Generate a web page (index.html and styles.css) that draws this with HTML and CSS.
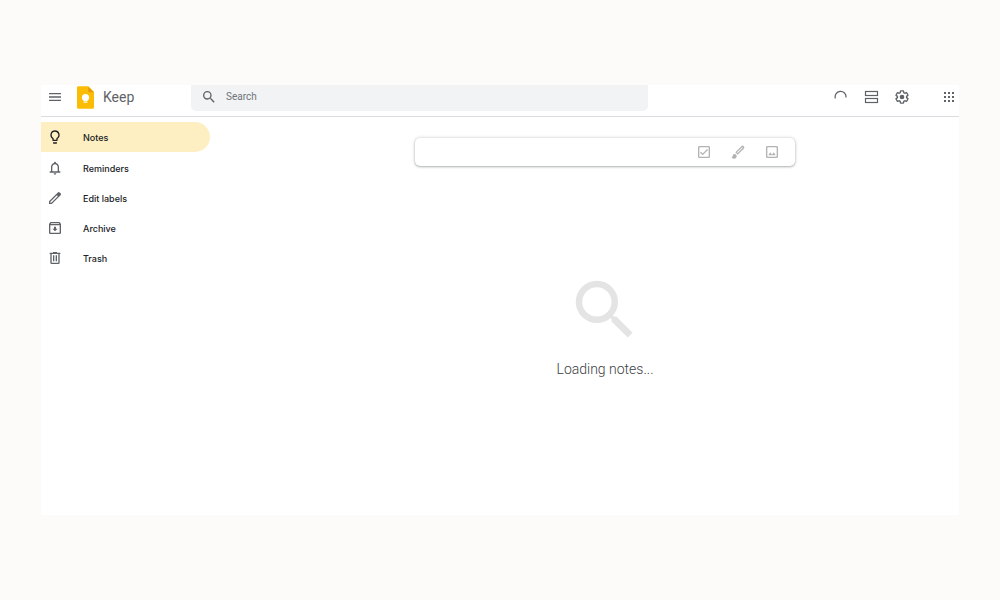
FILE: index.html
```html
<!DOCTYPE html>
<html lang="en">
<head>
  <meta charset="UTF-8">
  <meta name="viewport" content="width=device-width, initial-scale=1.0">
  <title>Keep</title>
  <link rel="stylesheet" href="styles.css">
</head>
<body>

  <div class="app">
    <header class="header">
      <div class="brand">
        <button class="icon-btn" aria-label="Main menu">
          <svg class="icon" viewBox="0 0 24 24"><path d="M3 18h18v-2H3v2zm0-5h18v-2H3v2zm0-7v2h18V6H3z"/></svg>
        </button>
        <a class="logo" href="#">
          <svg class="logo-mark" viewBox="0 0 18 24">
            <path fill="#fbbc04" d="M1.500 0H12l6 6v16.500a1.500 1.500 0 0 1-1.500 1.500h-15A1.500 1.500 0 0 1 0 22.500v-21A1.500 1.500 0 0 1 1.500 0z"/>
            <path fill="#e09a10" d="M12 1l5.500 5.500h-4A1.500 1.500 0 0 1 12 5z"/>
            <circle fill="#fff" cx="9" cy="12" r="3.800"/>
            <path fill="#fff" d="M7 14h4v1.500H7zM7 16.200h4v1.300H7z"/>
          </svg>
          <span>Keep</span>
        </a>
      </div>

      <form class="search">
        <button class="icon-btn" type="button" aria-label="Search">
          <svg class="icon" viewBox="0 0 24 24"><path d="M15.500 14h-.79l-.28-.27A6.470 6.470 0 0 0 16 9.500 6.500 6.500 0 1 0 9.500 16c1.610 0 3.090-.59 4.230-1.570l.27.28v.79l5 4.990L20.490 19l-4.990-5zm-6 0a4.500 4.500 0 1 1 0-9 4.500 4.500 0 0 1 0 9z"/></svg>
        </button>
        <input type="text" placeholder="Search" aria-label="Search">
      </form>

      <div class="actions">
        <button class="icon-btn" aria-label="Refreshing">
          <svg class="icon line" viewBox="0 0 16 16"><path d="M3.300 9.500A5.500 5.500 0 1 1 14 8.500"/></svg>
        </button>
        <button class="icon-btn" aria-label="List view">
          <svg class="icon line" viewBox="0 0 16 16"><rect x="2.500" y="2.500" width="12" height="4"/><rect x="2.500" y="9.500" width="12" height="4"/></svg>
        </button>
        <button class="icon-btn" aria-label="Settings">
          <svg class="icon" viewBox="0 0 24 24"><path d="M13.850 22.250h-3.700c-.74 0-1.360-.54-1.450-1.270l-.27-1.890c-.27-.14-.53-.29-.79-.46l-1.800.72c-.7.26-1.470-.03-1.810-.65L2.200 15.530c-.35-.66-.2-1.440.36-1.880l1.530-1.190c-.01-.15-.02-.3-.02-.46 0-.15.01-.31.02-.46l-1.520-1.190c-.59-.45-.74-1.260-.37-1.880l1.850-3.190c.34-.62 1.110-.9 1.790-.63l1.810.73c.26-.17.52-.32.78-.46l.27-1.910c.09-.7.71-1.250 1.440-1.250h3.700c.74 0 1.360.54 1.450 1.270l.27 1.890c.27.14.53.29.79.46l1.800-.72c.71-.26 1.480.03 1.820.65l1.840 3.180c.36.66.2 1.440-.36 1.880l-1.520 1.190c.01.15.02.3.02.46s-.01.31-.02.46l1.520 1.190c.56.45.72 1.230.37 1.860l-1.860 3.220c-.34.62-1.110.9-1.800.63l-1.800-.72c-.26.17-.52.32-.78.46l-.27 1.910c-.1.68-.72 1.220-1.460 1.220zm-3.230-2h2.760l.37-2.550.53-.22c.44-.18.88-.44 1.340-.78l.45-.34 2.380.96 1.380-2.400-2.030-1.580.07-.56c.03-.26.06-.51.06-.78s-.03-.53-.06-.78l-.07-.56 2.030-1.580-1.390-2.400-2.390.96-.45-.35c-.42-.32-.87-.58-1.330-.77l-.52-.22-.37-2.550h-2.760l-.37 2.550-.53.21c-.44.19-.88.44-1.340.79l-.45.330-2.380-.95-1.390 2.390 2.030 1.580-.07.56a7 7 0 0 0-.06.79c0 .26.02.53.06.78l.07.56-2.030 1.580 1.380 2.400 2.390-.96.45.35c.43.33.86.58 1.330.77l.53.22.38 2.550z"/><circle cx="12" cy="12" r="3.500"/></svg>
        </button>
        <button class="icon-btn apps" aria-label="Google apps">
          <svg class="icon" viewBox="0 0 16 16"><path d="M3 3h2v2H3zM7 3h2v2H7zM11 3h2v2h-2zM3 7h2v2H3zM7 7h2v2H7zM11 7h2v2h-2zM3 11h2v2H3zM7 11h2v2H7zM11 11h2v2h-2z"/></svg>
        </button>
      </div>
    </header>

    <div class="content">
      <nav class="sidebar">
        <a class="nav-item active" href="#">
          <svg class="icon" viewBox="0 0 24 24"><path d="M9 21c0 .5.4 1 1 1h4c.6 0 1-.5 1-1v-1H9v1zm3-19a7 7 0 0 0-4 12.700V17c0 .5.4 1 1 1h6c.6 0 1-.5 1-1v-2.300A7 7 0 0 0 12 2zm2.900 11.100l-.9.600V16h-4v-2.300l-.9-.600A5 5 0 1 1 17 9c0 1.600-.8 3.200-2.100 4.100z"/></svg>
          <span>Notes</span>
        </a>
        <a class="nav-item" href="#">
          <svg class="icon" viewBox="0 0 24 24"><path d="M18 17v-6c0-3.070-1.630-5.640-4.500-6.320V4a1.500 1.500 0 0 0-3 0v.68C7.640 5.360 6 7.920 6 11v6H4v2h16v-2h-2zm-2 0H8v-6c0-2.480 1.510-4.500 4-4.500s4 2.020 4 4.500v6zm-4 5a2 2 0 0 0 2-2h-4a2 2 0 0 0 2 2z"/></svg>
          <span>Reminders</span>
        </a>
        <a class="nav-item" href="#">
          <svg class="icon" viewBox="0 0 24 24"><path d="M20.410 4.940l-1.350-1.350a2 2 0 0 0-2.830 0L3 16.820V21h4.180L20.410 7.770a2 2 0 0 0 0-2.830zM6.410 19.060L5 19v-1.360l9.820-9.820 1.410 1.410-9.820 9.830z"/></svg>
          <span>Edit labels</span>
        </a>
        <a class="nav-item" href="#">
          <svg class="icon" viewBox="0 0 24 24"><path d="M20.540 5.230l-1.390-1.680C18.880 3.210 18.470 3 18 3H6c-.47 0-.88.21-1.160.55L3.460 5.230C3.170 5.570 3 6.020 3 6.500V19a2 2 0 0 0 2 2h14a2 2 0 0 0 2-2V6.500c0-.48-.17-.93-.46-1.270zM6.240 5h11.520l.83 1H5.420l.82-1zM5 19V8h14v11H5zm8.450-9h-2.900v3H8l4 4 4-4h-2.550z"/></svg>
          <span>Archive</span>
        </a>
        <a class="nav-item" href="#">
          <svg class="icon" viewBox="0 0 24 24"><path d="M15 4V3H9v1H4v2h1v13a2 2 0 0 0 2 2h10a2 2 0 0 0 2-2V6h1V4h-5zm2 15H7V6h10v13zM9 8h2v9H9zm4 0h2v9h-2z"/></svg>
          <span>Trash</span>
        </a>
      </nav>

      <main class="main">
        <div class="composer">
          <input type="text" aria-label="Take a note">
          <button class="icon-btn" aria-label="New list">
            <svg class="icon" viewBox="0 0 24 24"><path d="M19 3H5a2 2 0 0 0-2 2v14a2 2 0 0 0 2 2h14a2 2 0 0 0 2-2V5a2 2 0 0 0-2-2zm0 16H5V5h14v14zM18 9l-1.400-1.400-6.600 6.600-2.600-2.600L6 13l4 4z"/></svg>
          </button>
          <button class="icon-btn" aria-label="New note with drawing">
            <svg class="icon" viewBox="0 0 24 24"><path d="M7 15a3 3 0 0 0-3 3c0 1.300-1.200 2-2 2a5 5 0 0 0 4 2 4 4 0 0 0 4-4 3 3 0 0 0-3-3z"/><path fill-rule="evenodd" d="M20.700 3.300a2.600 2.600 0 0 0-3.700 0L8 12.500 11.500 16l9.200-9a2.600 2.600 0 0 0 0-3.700zM11.500 13.500l-1-1 7.800-7.800 1 1z"/></svg>
          </button>
          <button class="icon-btn" aria-label="New note with image">
            <svg class="icon" viewBox="0 0 24 24"><path d="M19 3H5a2 2 0 0 0-2 2v14a2 2 0 0 0 2 2h14a2 2 0 0 0 2-2V5a2 2 0 0 0-2-2zm0 16H5V5h14v14z"/><path d="M6.500 17l2.800-4.500L12 16l2.700-3.500 2.800 4.500z"/></svg>
          </button>
        </div>

        <div class="loading">
          <svg class="loading-icon" viewBox="0 0 24 24"><path d="M15.500 14h-.79l-.28-.27A6.470 6.470 0 0 0 16 9.500 6.500 6.500 0 1 0 9.500 16c1.610 0 3.090-.59 4.230-1.570l.27.28v.79l5 4.990L20.490 19l-4.990-5zm-6 0a4.500 4.500 0 1 1 0-9 4.500 4.500 0 0 1 0 9z"/></svg>
          <p>Loading notes...</p>
        </div>
      </main>
    </div>
  </div>

</body>
</html>
```
FILE: styles.css
```css
* {
  box-sizing: border-box;
}
body {
  margin: 0;
  padding: 85px 41px;
  min-height: 100vh;
  display: flex;
  background-color: #fdfbf9;
  color: #202124;
  font-family: Roboto, Arial, sans-serif;
  font-size: 10px;
}
a {
  color: inherit;
  text-decoration: none;
}
.app {
  flex: 1;
  background-color: #fff;
}
.icon {
  display: block;
  width: 16px;
  height: 16px;
  fill: #5f6368;
}
.icon.line {
  fill: none;
  stroke: #5f6368;
  stroke-width: 1.2;
}
.icon-btn {
  padding: 0;
  border: 0;
  background: none;
  cursor: pointer;
}

/* Header */
.header {
  display: flex;
  align-items: flex-start;
  height: 32px;
  border-bottom: 1px solid #dadce0;
}
.brand {
  display: flex;
  align-items: center;
  width: 150px;
  height: 24px;
  padding-left: 6px;
  gap: 14px;
}
.logo {
  display: flex;
  align-items: center;
  gap: 9px;
  font-size: 14px;
  color: #5f6368;
}
.logo-mark {
  width: 17px;
  height: 23px;
}
.search {
  display: flex;
  align-items: center;
  flex: 0 1 457px;
  height: 26px;
  padding: 0 10px 3px;
  gap: 9px;
  background-color: #f1f3f4;
  border-radius: 0 0 5px 5px;
}
.search input {
  flex: 1;
  min-width: 0;
  padding: 0;
  border: 0;
  outline: 0;
  background: none;
  font: inherit;
}
.search input::placeholder {
  color: #6f7378;
}
.actions {
  display: flex;
  align-items: center;
  height: 24px;
  margin-left: auto;
  padding-right: 2px;
  gap: 15px;
}
.apps {
  margin-left: 16px;
}

/* Sidebar */
.content {
  display: flex;
}
.sidebar {
  width: 210px;
  padding: 5px 41px 0 0;
}
.nav-item {
  display: flex;
  align-items: center;
  height: 30px;
  padding-left: 6px;
  gap: 20px;
  border-radius: 0 15px 15px 0;
  font-family: Inter, Roboto, sans-serif;
  font-size: 9px;
  font-weight: 500;
}
.nav-item.active {
  margin-bottom: 1px;
  background-color: #feefc3;
}
.nav-item.active .icon {
  fill: #202124;
}

/* Notes */
.main {
  flex: 1;
  display: flex;
  flex-direction: column;
  align-items: center;
  padding-top: 21px;
}
.composer {
  display: flex;
  align-items: center;
  width: 100%;
  max-width: 380px;
  height: 28px;
  padding: 0 15px;
  gap: 18px;
  border-radius: 5px;
  box-shadow: 0 1px 2px rgba(60, 64, 67, 0.3), 0 0 3px 1px rgba(60, 64, 67, 0.15);
}
.composer input {
  flex: 1;
  min-width: 0;
  border: 0;
  outline: 0;
  background: none;
  font: inherit;
}
.composer .icon {
  fill: #b0b2b4;
}
.loading {
  display: flex;
  flex-direction: column;
  align-items: center;
  margin-top: 105px;
}
.loading-icon {
  width: 78px;
  height: 78px;
  fill: #e4e4e4;
}
.loading p {
  margin: 10px 0 0;
  font-size: 14px;
  font-weight: 300;
  line-height: 20px;
  color: #3c4043;
}
```
